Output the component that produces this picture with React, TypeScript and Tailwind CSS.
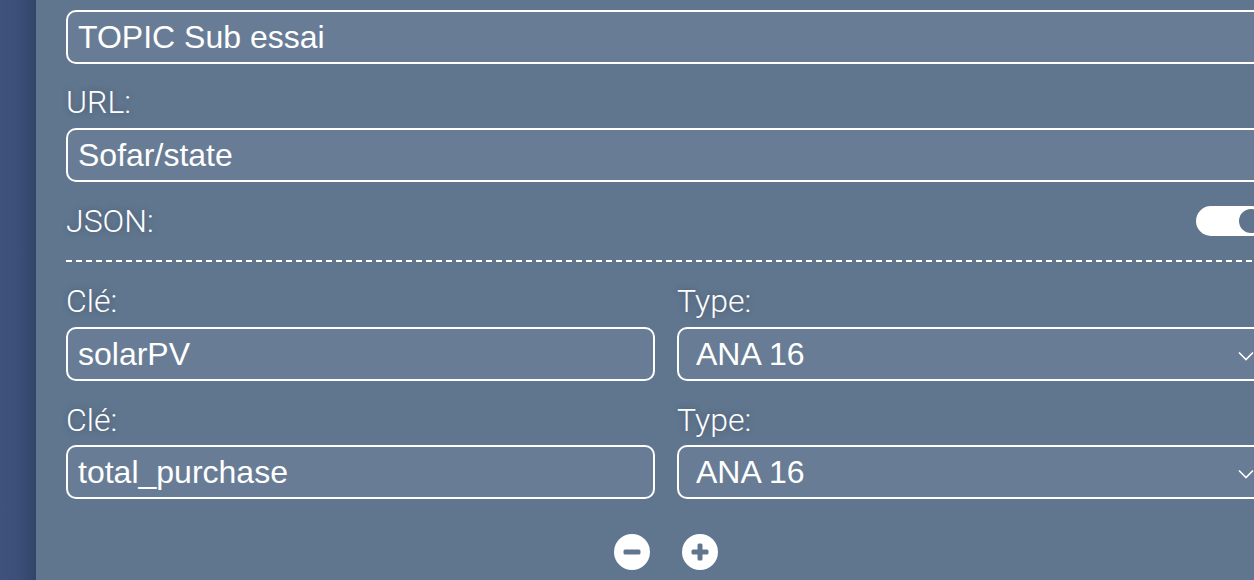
const label = "block text-[32px] leading-[37.5px] text-white font-light font-['Roboto',sans-serif] [text-shadow:0_0_6px_rgba(30,40,60,0.35)]"
const field = "w-full h-[54px] rounded-[10px] border-2 border-white bg-[#687d95] text-white text-[32px] font-['Liberation_Sans',Arial,sans-serif] flex items-center"

function Select({ value }: { value: string }) {
    return (
        <div className={`${field} relative pl-[17px]`}>
            <span>{value}</span>
            <svg className="absolute right-[10px] top-[22px] w-[16px] h-[10px]" viewBox="0 0 16 10" fill="none" stroke="white" strokeWidth={1.6}>
                <path d="M1 1.5 L8 8.5 L15 1.5" />
            </svg>
        </div>
    )
}

function KeyRow({ keyName }: { keyName: string }) {
    return (
        <div className="grid grid-cols-2 gap-[22px] mt-[21px]">
            <div>
                <span className={label}>Clé:</span>
                <div className={`${field} mt-[6px] pl-[10px]`}>{keyName}</div>
            </div>
            <div>
                <span className={label}>Type:</span>
                <div className="mt-[6px]">
                    <Select value="ANA 16" />
                </div>
            </div>
        </div>
    )
}

function App() {
    return (
        <div className="w-[1254px] h-[580px] overflow-hidden flex bg-[#60768e]">
            <div className="w-[36px] shrink-0 bg-gradient-to-r from-[#3e527c] via-[#3c4f78] to-[#33446a]" />
            <div className="shrink-0 w-[1230px] pl-[30px] pt-[10px]">
                <div className={`${field} pl-[10px]`}>TOPIC Sub essai</div>

                <span className={`${label} mt-[20px]`}>URL:</span>
                <div className={`${field} mt-[6px] pl-[10px]`}>Sofar/state</div>

                <div className="flex items-center justify-between mt-[21px]">
                    <span className={label}>JSON:</span>
                    <div className="w-[70px] h-[30px] rounded-full bg-white flex items-center justify-end pr-[3px]">
                        <div className="w-[24px] h-[24px] rounded-full bg-[#5f758d]" />
                    </div>
                </div>

                <div className="mt-[20px] h-[2px] bg-[repeating-linear-gradient(90deg,white_0_6px,transparent_6px_10px)]" />

                <KeyRow keyName="solarPV" />
                <KeyRow keyName="total_purchase" />

                <div className="flex justify-center gap-[32px] mt-[35px]">
                    <svg className="w-[36px] h-[36px]" viewBox="0 0 36 36">
                        <circle cx="18" cy="18" r="18" fill="white" />
                        <rect x="9.5" y="15.5" width="17" height="5" rx="1.5" fill="#60768e" />
                    </svg>
                    <svg className="w-[36px] h-[36px]" viewBox="0 0 36 36">
                        <circle cx="18" cy="18" r="18" fill="white" />
                        <rect x="9.5" y="15.5" width="17" height="5" rx="1.5" fill="#60768e" />
                        <rect x="15.5" y="9.5" width="5" height="17" rx="1.5" fill="#60768e" />
                    </svg>
                </div>
            </div>
        </div>
    )
}

export default App
